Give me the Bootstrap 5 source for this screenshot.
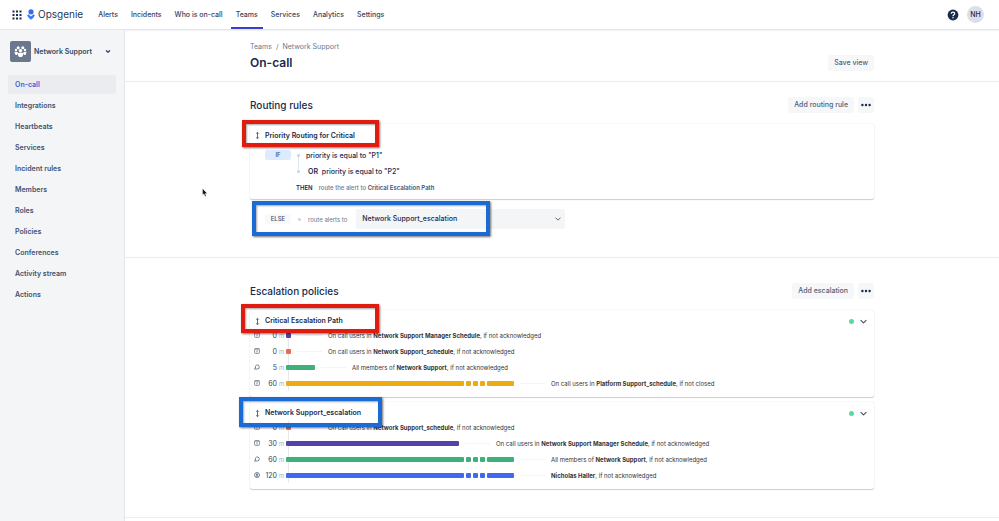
<!DOCTYPE html>
<html lang="en">
<head>
<meta charset="utf-8">
<meta name="viewport" content="width=device-width, initial-scale=1">
<title>On-call - Network Support - Opsgenie</title>
<link href="https://cdn.jsdelivr.net/npm/bootstrap@5.3.0/dist/css/bootstrap.min.css" rel="stylesheet">
<style>
  :root { --ink: #172b4d; --slate: #42526e; --muted-ink: #6b778c; --soft: #f4f5f7; --line: #ebecf0; }
  body { font-family: Inter, "Liberation Sans", sans-serif; font-size: 7px; line-height: 13px; color: var(--ink); background: #fff; }
  svg { display: block; flex: none; }
  a { text-decoration: none; color: inherit; }
  .topbar { height: 30px; padding: 0 15px 0 12px; border-bottom: 1px solid #e4e7ec; box-shadow: 0 1px 1px #f1f2f5; }
  .brand { font-size: 10px; gap: 3px; margin: 0 10px 0 5px; color: #253858; }
  .topbar .nav { gap: 3px; }
  .topbar .nav-link { padding: 8px 5px 6px; border-bottom: 2px solid transparent; color: #344563; font-weight: 500; }
  .topbar .nav-link.active { border-color: #3b3fc4; }
  .plain-btn { border: 0; background: none; padding: 0; color: var(--ink); }
  .avatar { width: 17px; height: 17px; border-radius: 50%; background: #dcdfe8; font-weight: 500; }
  .sidebar { width: 125px; background: var(--soft); border-right: 1px solid #e2e4e9; padding: 11px 8px 0; }
  .team { gap: 3px; padding: 0 4px 0 2px; margin-bottom: 13px; color: #344563; font-weight: 600; }
  .team-icon { width: 21px; height: 21px; border-radius: 2px; background: #6b778c; }
  .sidebar .nav { gap: 2px; }
  .sidebar .nav-link { padding: 3px 7px; color: var(--slate); font-weight: 600; border-radius: 2px; }
  .sidebar .nav-link.active { background: var(--line); color: #3a62d7; }
  .band { border-bottom: 1px solid var(--line); }
  .page-head { padding: 10px 0; }
  .rules { padding: 15px 0 28px; }
  .policies { padding: 25px 0 28px; }
  .section-head { margin-bottom: 11px; }
  .crumbs { margin-bottom: 2px; color: var(--muted-ink); gap: 4px; }
  .wrap { width: 100%; max-width: 624px; margin: 0 auto; }
  h1, h2 { margin: 0; font-weight: 500; color: var(--ink); }
  h1 { font-size: 12px; line-height: 16px; font-weight: 600; }
  h2 { font-size: 10px; line-height: 16px; }
  .btn-soft { --bs-btn-font-size: 7px; --bs-btn-font-weight: 500; --bs-btn-line-height: 16px; --bs-btn-padding-x: 6px; --bs-btn-padding-y: 0; --bs-btn-border-width: 0; --bs-btn-border-radius: 2px; --bs-btn-color: #505f79; --bs-btn-bg: #f6f7f9; --bs-btn-hover-bg: #ebecf0; }
  .btn-dots { --bs-btn-padding-x: 3px; --bs-btn-color: #172b4d; height: 16px; }
  .panel { border: 0; border-radius: 2px; box-shadow: 0 1px 1px rgba(9,30,66,.2), 0 0 1px rgba(9,30,66,.2); color: var(--ink); }
  .panel + .panel { margin-top: 5px; }
  .panel-title { padding: 5px 6px 0 5px; gap: 5px; font-weight: 600; }
  .policies .panel-title { line-height: 12px; }
  .panel-title .plain-btn { color: var(--slate); }
  .rule-rows { padding: 5px 15px 4px; font-weight: 500; }
  .rule-row { height: 16px; gap: 6px; }
  .rule-row b, .small-copy b { font-weight: 600; }
  .then-row { padding-left: 31px; font-size: 6px; }
  .or-part { padding-left: 2px; }
  .or-part b { margin-right: 2px; }
  .tag { width: 26px; line-height: 10px; text-align: center; border-radius: 2px; font-size: 6px; font-weight: 500; }
  .tag-if { background: #deebff; color: #344b80; }
  .tag-else { background: #f8f9fa; color: var(--slate); }
  .joint { position: relative; width: 3px; height: 3px; background: #c6d4e6; border-radius: 50%; }
  .joint-line::after { content: ""; position: absolute; left: 1px; top: 3px; width: 1px; height: 13px; background: #dde5ef; }
  .small-copy { font-size: 6px; color: var(--muted-ink); }
  .small-copy b { color: var(--slate); }
  .else-row { position: relative; padding-left: 15px; margin-top: 10px; gap: 7px; }
  .else-row .small-copy { padding-right: 2px; }
  .policy-select { width: 209px; height: 20px; border: 0; border-radius: 2px; padding: 0 18px 0 6px; background-color: var(--soft); background-size: 6px; background-position: right 4px center; font-size: 7px; font-weight: 500; line-height: 20px; color: var(--ink); }
  .steps { padding: 0 6px 6px 3px; font-size: 6px; position: relative; }
  .steps::before { content: ""; position: absolute; left: 38px; top: 2px; bottom: 6px; border-left: 1px solid #e6e8ee; }
  .step { height: 16px; }
  .step-time { width: 16px; text-align: right; font-size: 7px; color: #344563; }
  .step-unit { width: 9px; padding-left: 2px; color: #a5adba; }
  .bars { position: relative; gap: 2px; }
  .seg { height: 5px; border-radius: 1px; background: currentColor; }
  .leader { width: 25px; margin: 0 6px; border-top: 1px solid #f3f4f6; }
  .step-text { color: #333; white-space: nowrap; }
  .step-text b { font-weight: 700; }
  .violet { color: #5243aa; } .coral { color: #eb6a50; } .green { color: #3cb179; } .amber { color: #edab12; } .blue { color: #4169ef; }
  .dot { width: 5px; height: 5px; border-radius: 50%; background: #57d9a3; }
  .callout { position: absolute; z-index: 2; border: 4px solid; box-shadow: 1px 1px 2px rgba(0,0,0,.55), inset 1px 1px 2px rgba(0,0,0,.35); pointer-events: none; }
  .callout-red { border-color: #e01b10; } .callout-blue { border-color: #1a6cd4; }
  .at-rule { left: -8px; top: -4px; width: 137px; height: 27px; }
  .at-critical { left: -9px; top: -6px; width: 138px; height: 29px; }
  .at-network { left: -11px; top: -5px; width: 143px; height: 30px; }
  .at-else { left: 2px; top: -8px; width: 238px; height: 35px; }
  .pointer { position: absolute; left: 77px; top: 158px; }
</style>
</head>
<body class="d-flex flex-column min-vh-100">
<svg class="d-none" aria-hidden="true">
  <symbol id="i-move" viewBox="0 0 5 9"><path d="M2.500 1.500v6M1.200 2.600 2.500 1.300 3.800 2.600M1.200 6.400 2.500 7.700 3.800 6.400" fill="none" stroke="#344563" stroke-width=".8"/></symbol>
  <symbol id="i-chev" viewBox="0 0 8 8"><path d="M1.700 3 4 5.200 6.300 3" fill="none" stroke="currentColor" stroke-width="1" stroke-linecap="round" stroke-linejoin="round"/></symbol>
  <symbol id="i-chev-bold" viewBox="0 0 8 8"><path d="M2.400 2.800 4 4.400 5.600 2.800" fill="none" stroke="currentColor" stroke-width="1.300" stroke-linecap="round" stroke-linejoin="round"/></symbol>
  <symbol id="i-dots" viewBox="0 0 10 4"><circle cx="1.400" cy="2" r="1.200"/><circle cx="5" cy="2" r="1.200"/><circle cx="8.600" cy="2" r="1.200"/></symbol>
  <symbol id="i-cal" viewBox="0 0 8 8"><rect x="1.600" y="1.600" width="4.800" height="4.800" rx=".8" fill="none" stroke="#5a677d" stroke-width=".7"/><path d="M1.600 2.200h4.800M3 4h2M3.500 5.100h1" stroke="#5a677d" stroke-width=".6"/></symbol>
  <symbol id="i-team" viewBox="0 0 8 8"><path d="M2.600 5.100a2 2 0 1 1 1.800.9H1.400M1.400 6l1.500-1.300" fill="none" stroke="#42526e" stroke-width=".7"/></symbol>
  <symbol id="i-user" viewBox="0 0 8 8"><circle cx="4" cy="4" r="2.500" fill="none" stroke="#42526e" stroke-width=".7"/><circle cx="4" cy="3.300" r=".9" fill="#42526e"/><path d="M2.500 5.500c.3-1.400 2.700-1.400 3 0z" fill="#42526e"/></symbol>
</svg>

<header class="topbar d-flex align-items-center">
  <button class="plain-btn" type="button" aria-label="Switch product">
    <svg width="10" height="10" viewBox="0 0 10 10" fill="#172b4d"><path d="M.5.5h2v2h-2zM4 .5h2v2H4zM7.500.5h2v2h-2zM.5 4h2v2h-2zM4 4h2v2H4zM7.500 4h2v2h-2zM.5 7.500h2v2h-2zM4 7.500h2v2H4zM7.500 7.500h2v2h-2z"/></svg>
  </button>
  <a class="brand d-flex align-items-center" href="#">
    <svg width="8" height="11" viewBox="0 0 8 11"><circle cx="4" cy="2.800" r="2.600" fill="#2f6fee"/><path d="M.1 6.300 1.800 5.300Q2.800 6.700 4 7.300 5.200 6.700 6.200 5.300l1.700 1Q6.600 9.300 4.300 10.600q-.3.200-.6 0Q1.400 9.300.1 6.300z" fill="#3b7cf5"/></svg>
    <span>Opsgenie</span>
  </a>
  <nav class="nav flex-nowrap" aria-label="Main">
    <a class="nav-link" href="#">Alerts</a>
    <a class="nav-link" href="#">Incidents</a>
    <a class="nav-link" href="#">Who is on-call</a>
    <a class="nav-link active" aria-current="page" href="#">Teams</a>
    <a class="nav-link" href="#">Services</a>
    <a class="nav-link" href="#">Analytics</a>
    <a class="nav-link" href="#">Settings</a>
  </nav>
  <button class="plain-btn ms-auto me-2" type="button" aria-label="Help">
    <svg width="12" height="12" viewBox="0 0 12 12"><circle cx="6" cy="6" r="5.400" fill="#172b4d"/><path d="M4.300 4.800C4.300 2.400 7.700 2.600 7.700 4.700 7.700 5.900 6 5.800 6 7.200" fill="none" stroke="#fff" stroke-width="1.200"/><circle cx="6" cy="8.800" r=".75" fill="#fff"/></svg>
  </button>
  <button class="plain-btn avatar" type="button" aria-label="Account NH">NH</button>
</header>

<div class="d-flex flex-grow-1">
  <aside class="sidebar flex-shrink-0">
    <button class="plain-btn team d-flex align-items-center w-100" type="button">
      <span class="team-icon d-flex align-items-center justify-content-center">
        <svg width="13" height="13" viewBox="0 0 13 13" fill="#fff"><circle cx="4.200" cy="2.700" r="1.500"/><circle cx="8.800" cy="2.700" r="1.500"/><circle cx="2" cy="4.900" r="1.200"/><circle cx="11" cy="4.900" r="1.200"/><circle cx="6.500" cy="5.600" r="1.700"/><path d="M.6 6.700h2.500l.8 1.200-.8 2H1.700Q.6 9 .6 6.700zM12.400 6.700H9.900l-.8 1.200.8 2h1.400q1.100-.9 1.100-3.200zM3.800 8q2.700-1 5.400 0 0 3-1.400 4H5.200Q3.800 11 3.800 8z"/></svg>
      </span>
      <span>Network Support</span>
      <svg class="ms-auto" width="8" height="8"><use href="#i-chev-bold"/></svg>
    </button>
    <nav class="nav flex-column" aria-label="Team">
      <a class="nav-link active" aria-current="page" href="#">On-call</a>
      <a class="nav-link" href="#">Integrations</a>
      <a class="nav-link" href="#">Heartbeats</a>
      <a class="nav-link" href="#">Services</a>
      <a class="nav-link" href="#">Incident rules</a>
      <a class="nav-link" href="#">Members</a>
      <a class="nav-link" href="#">Roles</a>
      <a class="nav-link" href="#">Policies</a>
      <a class="nav-link" href="#">Conferences</a>
      <a class="nav-link" href="#">Activity stream</a>
      <a class="nav-link" href="#">Actions</a>
    </nav>
  </aside>

  <main class="flex-grow-1 position-relative">
    <div class="band page-head">
      <div class="wrap d-flex align-items-end justify-content-between">
        <div>
          <nav class="d-flex text-nowrap crumbs" aria-label="Breadcrumb"><a href="#">Teams</a><span>/</span><a href="#">Network Support</a></nav>
          <h1>On-call</h1>
        </div>
        <button class="btn btn-soft" type="button">Save view</button>
      </div>
    </div>

    <section class="band rules">
      <div class="wrap">
        <div class="section-head d-flex align-items-center">
          <h2 class="me-auto">Routing rules</h2>
          <button class="btn btn-soft me-1" type="button">Add routing rule</button>
          <button class="btn btn-soft btn-dots" type="button" aria-label="More routing actions"><svg width="10" height="4" fill="currentColor"><use href="#i-dots"/></svg></button>
        </div>
        <article class="card panel">
          <div class="callout callout-red at-rule"></div>
          <div class="panel-title d-flex align-items-center"><svg width="5" height="9"><use href="#i-move"/></svg><span>Priority Routing for Critical</span></div>
          <div class="rule-rows">
            <div class="rule-row d-flex align-items-center"><span class="tag tag-if">IF</span><span class="joint joint-line"></span><span>priority is equal to "P1"</span></div>
            <div class="rule-row d-flex align-items-center"><span class="tag"></span><span class="joint"></span><span class="or-part"><b>OR</b> priority is equal to "P2"</span></div>
            <div class="rule-row then-row d-flex align-items-center"><b>THEN</b><span class="small-copy">route the alert to <b>Critical Escalation Path</b></span></div>
          </div>
        </article>
        <div class="else-row d-flex align-items-center">
          <div class="callout callout-blue at-else"></div>
          <span class="tag tag-else">ELSE</span><span class="joint"></span>
          <label class="small-copy" for="else-policy">route alerts to</label>
          <select class="form-select policy-select" id="else-policy"><option>Network Support_escalation</option></select>
        </div>
      </div>
    </section>

    <section class="band policies">
      <div class="wrap">
        <div class="section-head d-flex align-items-center">
          <h2 class="me-auto">Escalation policies</h2>
          <button class="btn btn-soft me-1" type="button">Add escalation</button>
          <button class="btn btn-soft btn-dots" type="button" aria-label="More escalation actions"><svg width="10" height="4" fill="currentColor"><use href="#i-dots"/></svg></button>
        </div>
        <article class="card panel">
          <div class="callout callout-red at-critical"></div>
          <div class="panel-title d-flex align-items-center"><svg width="5" height="9"><use href="#i-move"/></svg><span class="me-auto">Critical Escalation Path</span><span class="dot"></span><button class="plain-btn" type="button" aria-label="Toggle Critical Escalation Path"><svg width="9" height="9"><use href="#i-chev"/></svg></button></div>
          <div class="steps">
            <div class="step d-flex align-items-center"><svg width="8" height="8"><use href="#i-cal"/></svg><span class="step-time">0</span><span class="step-unit">m</span><div class="bars d-flex violet"><span class="seg" style="width:5px"></span></div><span class="leader"></span><span class="step-text">On call users in <b>Network Support Manager Schedule</b>, if not acknowledged</span></div>
            <div class="step d-flex align-items-center"><svg width="8" height="8"><use href="#i-cal"/></svg><span class="step-time">0</span><span class="step-unit">m</span><div class="bars d-flex coral"><span class="seg" style="width:5px"></span></div><span class="leader"></span><span class="step-text">On call users in <b>Network Support_schedule</b>, if not acknowledged</span></div>
            <div class="step d-flex align-items-center"><svg width="8" height="8"><use href="#i-team"/></svg><span class="step-time">5</span><span class="step-unit">m</span><div class="bars d-flex green"><span class="seg" style="width:29px"></span></div><span class="leader"></span><span class="step-text">All members of <b>Network Support</b>, if not acknowledged</span></div>
            <div class="step d-flex align-items-center"><svg width="8" height="8"><use href="#i-cal"/></svg><span class="step-time">60</span><span class="step-unit">m</span><div class="bars d-flex amber"><span class="seg" style="width:178px"></span><span class="seg" style="width:5px"></span><span class="seg" style="width:5px"></span><span class="seg" style="width:5px"></span><span class="seg" style="width:27px"></span></div><span class="leader"></span><span class="step-text">On call users in <b>Platform Support_schedule</b>, if not closed</span></div>
          </div>
        </article>
        <article class="card panel">
          <div class="callout callout-blue at-network"></div>
          <div class="panel-title d-flex align-items-center"><svg width="5" height="9"><use href="#i-move"/></svg><span class="me-auto">Network Support_escalation</span><span class="dot"></span><button class="plain-btn" type="button" aria-label="Toggle Network Support_escalation"><svg width="9" height="9"><use href="#i-chev"/></svg></button></div>
          <div class="steps">
            <div class="step d-flex align-items-center"><svg width="8" height="8"><use href="#i-cal"/></svg><span class="step-time">0</span><span class="step-unit">m</span><div class="bars d-flex coral"><span class="seg" style="width:5px"></span></div><span class="leader"></span><span class="step-text">On call users in <b>Network Support_schedule</b>, if not acknowledged</span></div>
            <div class="step d-flex align-items-center"><svg width="8" height="8"><use href="#i-cal"/></svg><span class="step-time">30</span><span class="step-unit">m</span><div class="bars d-flex violet"><span class="seg" style="width:173px"></span></div><span class="leader"></span><span class="step-text">On call users in <b>Network Support Manager Schedule</b>, if not acknowledged</span></div>
            <div class="step d-flex align-items-center"><svg width="8" height="8"><use href="#i-team"/></svg><span class="step-time">60</span><span class="step-unit">m</span><div class="bars d-flex green"><span class="seg" style="width:178px"></span><span class="seg" style="width:5px"></span><span class="seg" style="width:5px"></span><span class="seg" style="width:5px"></span><span class="seg" style="width:27px"></span></div><span class="leader"></span><span class="step-text">All members of <b>Network Support</b>, if not acknowledged</span></div>
            <div class="step d-flex align-items-center"><svg width="8" height="8"><use href="#i-user"/></svg><span class="step-time">120</span><span class="step-unit">m</span><div class="bars d-flex blue"><span class="seg" style="width:178px"></span><span class="seg" style="width:5px"></span><span class="seg" style="width:5px"></span><span class="seg" style="width:5px"></span><span class="seg" style="width:27px"></span></div><span class="leader"></span><span class="step-text"><b>Nicholas Haller</b>, if not acknowledged</span></div>
          </div>
        </article>
      </div>
    </section>
    <svg class="pointer" width="6" height="9" viewBox="0 0 6 9"><path d="M.5.5v6.600l1.500-1.300 1 2.600 1.200-.5-1-2.500h2z" fill="#111" stroke="#fff" stroke-width=".4"/></svg>
  </main>
</div>
<script src="https://cdn.jsdelivr.net/npm/bootstrap@5.3.0/dist/js/bootstrap.bundle.min.js"></script>
</body>
</html>
